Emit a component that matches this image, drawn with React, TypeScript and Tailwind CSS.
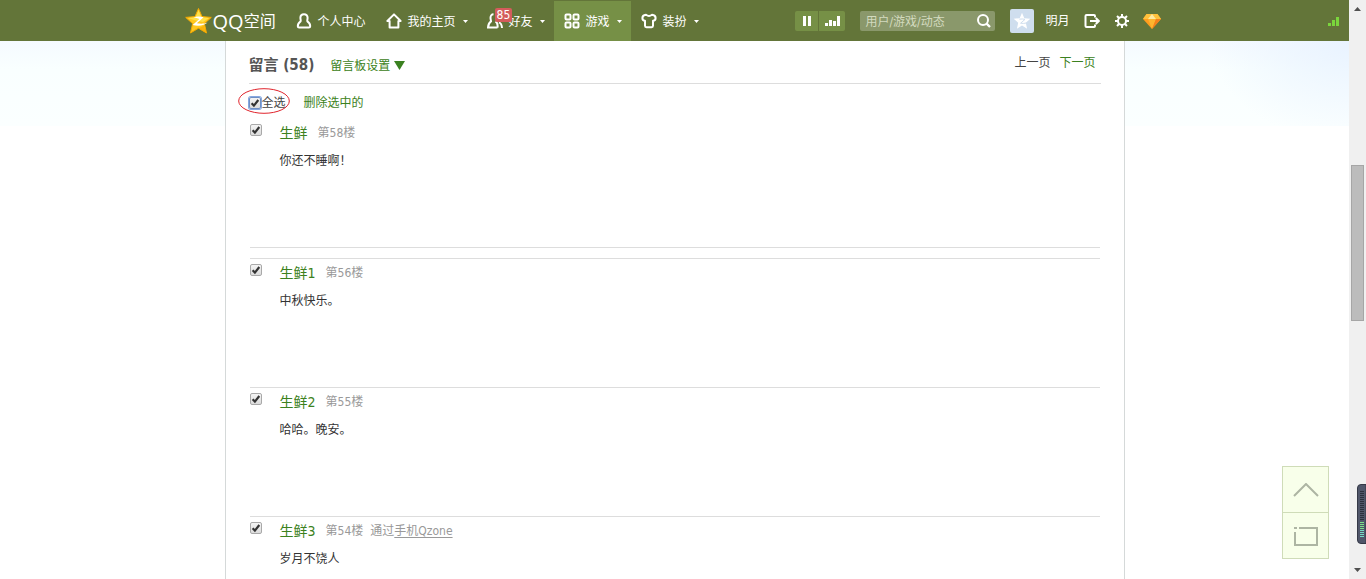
import type { ReactNode } from "react";

type Message = {
  name: string;
  floor: number;
  body: string;
  source?: string;
};

const firstMessage: Message = { name: "生鲜", floor: 58, body: "你还不睡啊！" };

const messages: Message[] = [
  { name: "生鲜1", floor: 56, body: "中秋快乐。" },
  { name: "生鲜2", floor: 55, body: "哈哈。晚安。" },
  { name: "生鲜3", floor: 54, body: "岁月不饶人", source: "手机Qzone" },
];

function Svg({ children, size = "size-4" }: { children: ReactNode; size?: string }) {
  return (
    <svg viewBox="0 0 16 16" className={`${size} shrink-0`} fill="none" stroke="currentColor" strokeWidth="2" aria-hidden="true">
      {children}
    </svg>
  );
}

const personPath = "M8 1.2C5.7 1.2 4.4 2.8 4.4 4.8C4.4 6.4 5 7.3 4.6 8.3C2.6 9.6 1.8 11 1.8 13.2Q1.8 14.6 3.2 14.6H12.8Q14.2 14.6 14.2 13.2C14.2 11 13.4 9.6 11.4 8.3C11 7.3 11.6 6.4 11.6 4.8C11.6 2.8 10.3 1.2 8 1.2Z";

function NavItem({
  icon,
  label,
  menu = true,
  active = false,
  badge,
}: {
  icon: ReactNode;
  label: string;
  menu?: boolean;
  active?: boolean;
  badge?: number;
}) {
  return (
    <a
      href="#"
      className={`relative flex h-10 items-center pl-[10px] text-xs text-white ${menu ? "pr-[9px]" : "pr-[10px]"} ${active ? "bg-[#769046]" : ""}`}
    >
      {icon}
      <span className="ml-[6px] pt-0.5">{label}</span>
      {menu && (
        <svg viewBox="0 0 5 3" className="ml-[7px] h-[3px] w-[5px]" aria-hidden="true">
          <path d="M0 0H5L2.5 3Z" fill="#fff" />
        </svg>
      )}
      {badge !== undefined && (
        <span className="absolute left-[18px] top-[7px] rounded-xs bg-[#d45c5c] px-[2px] text-xs leading-[14px]">
          {badge}
        </span>
      )}
    </a>
  );
}

function Tick({ label, focused = false }: { label: string; focused?: boolean }) {
  return (
    <span className="grid size-3 shrink-0">
      <input
        type="checkbox"
        defaultChecked
        aria-label={label}
        className={`peer col-start-1 row-start-1 size-3 appearance-none rounded-xs border bg-linear-to-b from-[#f4f4f4] to-[#dcdcdc] ${
          focused ? "border-[#6f8fc4] ring-1 ring-[#86a8e0]" : "border-[#a9a9a9]"
        }`}
      />
      <svg viewBox="0 0 12 12" className="pointer-events-none invisible col-start-1 row-start-1 size-3 peer-checked:visible" aria-hidden="true">
        <path d="M2.6 6.2L4.9 8.6L9.3 3" fill="none" stroke="#333" strokeWidth="2.2" />
      </svg>
    </span>
  );
}

function MessageItem({ message }: { message: Message }) {
  return (
    <article className="flex h-32 gap-[18px] pt-[5px]">
      <Tick label={`选择第${message.floor}楼`} />
      <div>
        <div className="flex h-[18px] items-center text-xs text-[#999]">
          <a href="#" className="text-sm text-[#3b8120]">{message.name}</a>
          <span className="ml-[10px]">第{message.floor}楼</span>
          {message.source && (
            <span className="ml-[7px]">
              通过
              <a href="#" className="underline underline-offset-2">{message.source}</a>
            </span>
          )}
        </div>
        <p className="mt-[9px] text-xs leading-5 text-[#333]">{message.body}</p>
      </div>
    </article>
  );
}

function Header() {
  return (
    <header className="grid h-[41px] shrink-0 grid-cols-[1fr_980px_1fr] bg-[#637539] pt-px">
      <div />
      <div className="flex items-center">
        <a href="#" className="flex w-[101px] items-center gap-px text-white">
          <svg viewBox="0 0 27 26" className="h-[26px] w-[27px]" aria-hidden="true">
            <path d="M13.5 .5L17 8.6L26.3 9.4L19.4 15.6L21.5 25L13.5 20.2L5.5 25L7.6 15.6L.7 9.4L10 8.6Z" fill="#ffc81e" stroke="#f5a800" />
            <path d="M13.5 2L16.4 9.2L24 10L18 14L9 12L3 10L10.6 9.2Z" fill="#ffe14a" />
            <path d="M8.5 9.2C12 8 16 8.2 18.6 9.3L11.8 15.3C15 16 19.5 16 22.5 14.6C20 17.6 13 18.7 7.6 17L14.5 11C12.5 10.2 10.5 9.8 8.5 9.2Z" fill="#fff" />
            <path d="M18.6 17.7L21.5 25L13.5 20.2L7 24Z" fill="#f7a600" opacity=".6" />
          </svg>
          <span className="flex items-center pt-0.5">
            <span className="font-['Open_Sans'] text-xl leading-5">QQ</span>
            <span className="text-base leading-5">空间</span>
          </span>
        </a>
        <nav className="flex">
          <NavItem label="个人中心" menu={false} icon={<Svg><path d={personPath} /></Svg>} />
          <NavItem label="我的主页" icon={<Svg><path d="M8 1.4L1.4 8H3.6V14.4H12.4V8H14.6Z" strokeLinejoin="round" /></Svg>} />
          <NavItem
            label="好友"
            badge={85}
            icon={
              <Svg>
                <path d="M10.5 14.6H1C1.2 11 2.2 9.5 4 8.4C4 7.4 3.5 6.4 3.5 4.8C3.5 2.8 4.6 1.2 6.5 1.2M8.6 8.4C10 9.5 11 11.5 10.5 14.6" />
                <path d="M12 9.4C14 10.2 14.8 12 15 15" />
              </Svg>
            }
          />
          <NavItem
            label="游戏"
            active
            icon={
              <Svg>
                <rect x="1.5" y="1.5" width="5" height="5" rx="1" />
                <rect x="9.5" y="1.5" width="5" height="5" rx="1" />
                <rect x="1.5" y="9.5" width="5" height="5" rx="1" />
                <rect x="9.5" y="9.5" width="5" height="5" rx="1" />
              </Svg>
            }
          />
          <NavItem
            label="装扮"
            icon={<Svg><path d="M5 1.8Q1.4 2.2 1.4 5Q1.4 7.8 4 7.8V12.8Q4 14.2 5.4 14.2H10.6Q12 14.2 12 12.8V7.8Q14.6 7.8 14.6 5Q14.6 2.2 11 1.8Q8 4 5 1.8Z" strokeLinejoin="round" /></Svg>}
          />
        </nav>
        <div className="ml-auto flex items-center pr-1 text-white">
          <div className="flex gap-px">
            <button type="button" aria-label="暂停" className="flex h-5 w-[23px] items-center justify-center rounded-l-xs bg-[#769046]">
              <svg viewBox="0 0 8 10" className="h-[10px] w-2" fill="#fff"><path d="M0 0H3V10H0ZM5 0H8V10H5Z" /></svg>
            </button>
            <button type="button" aria-label="音量" className="flex h-5 w-[26px] items-center justify-center rounded-r-xs bg-[#769046]">
              <svg viewBox="0 0 15 10" className="h-[10px] w-[15px]" fill="#fff"><path d="M0 7H3V10H0ZM4 4H7V10H4ZM8 5H11V10H8ZM12 0H15V10H12Z" /></svg>
            </button>
          </div>
          <form className="ml-[15px] flex h-5 w-[135px] items-center rounded-xs bg-[#8a986b] pl-[5px] pr-[3px]">
            <input
              type="text"
              aria-label="搜索"
              placeholder="用户/游戏/动态"
              className="min-w-0 flex-1 bg-transparent pt-0.5 text-xs outline-none placeholder:text-[#d3dabf]"
            />
            <button type="button" aria-label="搜索">
              <Svg><circle cx="7" cy="7" r="5" /><path d="M10.6 10.6L14 14" strokeWidth="2.4" /></Svg>
            </button>
          </form>
          <a href="#" aria-label="头像" className="ml-[15px] flex size-6 items-center justify-center rounded-xs bg-[#cfdeee]">
            <svg viewBox="0 0 18 18" className="size-[18px]">
              <path d="M9 .8L11.3 6.2L17.3 6.8L12.8 10.7L14.1 16.7L9 13.6L3.9 16.7L5.2 10.7L.7 6.8L6.7 6.2Z" fill="#fff" />
              <path d="M6.4 7.2C8.4 6.8 10.4 6.9 12 7.4L7.6 11.2C9.6 11.6 11.6 11.5 13.2 11" fill="none" stroke="#cfdeee" />
            </svg>
          </a>
          <a href="#" className="ml-[11px] text-xs">明月</a>
          <button type="button" aria-label="退出" className="ml-[14px]">
            <Svg><path d="M11 4.5V3Q11 2 10 2H2.5Q1.5 2 1.5 3V13Q1.5 14 2.5 14H10Q11 14 11 13V11.5M6 8H14.5M11.8 5L14.8 8L11.8 11" /></Svg>
          </button>
          <button type="button" aria-label="设置" className="ml-[14px]">
            <Svg>
              <circle cx="8" cy="8" r="4" />
              <path d="M8 1V4M8 12V15M1 8H4M12 8H15M3 3L5 5M11 11L13 13M3 13L5 11M11 5L13 3" />
            </Svg>
          </button>
          <a href="#" aria-label="黄钻" className="ml-[13px]">
            <svg viewBox="0 0 18 15" className="h-[15px] w-[18px]">
              <path d="M3.5 0H14.5L18 5L9 15L0 5Z" fill="#ff9d1e" />
              <path d="M3.5 0H14.5L18 5H0Z" fill="#ffc23c" />
              <path d="M5 5L9 0L13 5Z" fill="#ffe9a0" />
              <path d="M5 5H13L9 15Z" fill="#ffb52e" />
              <path d="M13 5H18L9 15Z" fill="#f5801c" />
            </svg>
          </a>
        </div>
      </div>
      <div className="flex items-center justify-end pr-[10px]">
        <svg viewBox="0 0 11 9" className="h-[9px] w-[11px]" fill="#7ad63c" aria-hidden="true">
          <path d="M0 6H3V9H0ZM4 3H7V9H4ZM8 0H11V9H8Z" />
        </svg>
      </div>
    </header>
  );
}

function Board() {
  return (
    <main className="mx-auto w-[900px] border-x border-[#d5d9d9] bg-white px-[23px]">
      <div className="flex h-[43px] items-center border-b border-[#ddd] pt-[7px] text-xs">
        <h1 className="text-[15px] font-bold text-[#555]">留言 (58)</h1>
        <button type="button" className="ml-4 flex items-center gap-1 text-[#3b8120]">
          留言板设置
          <svg viewBox="0 0 11 9" className="h-[9px] w-[11px]" aria-hidden="true"><path d="M0 0H11L5.5 9Z" fill="#3b8120" /></svg>
        </button>
        <div className="mb-[6px] ml-auto mr-[5px] flex gap-[9px]">
          <a href="#" className="text-[#444]">上一页</a>
          <a href="#" className="text-[#3b8120]">下一页</a>
        </div>
      </div>
      <div className="relative flex h-[35px] items-center pt-[3px] text-xs">
        <label className="flex items-center gap-px text-[#444]">
          <Tick label="全选" focused />
          <span>全选</span>
        </label>
        <button type="button" className="ml-[18px] text-[#3b8120]">删除选中的</button>
        <svg viewBox="0 0 52 26" className="pointer-events-none absolute -left-[11px] top-1 h-[26px] w-[52px]" aria-hidden="true">
          <ellipse cx="26" cy="13" rx="25.3" ry="12.3" fill="none" stroke="#e0242c" />
        </svg>
      </div>
      <section className="px-px">
        <div className="mb-[10px] border-b border-[#ddd]">
          <MessageItem message={firstMessage} />
        </div>
        {messages.map((message) => (
          <div key={message.floor} className="border-t border-[#ddd]">
            <MessageItem message={message} />
          </div>
        ))}
      </section>
    </main>
  );
}

function Scrollbar() {
  return (
    <div className="flex w-[17px] shrink-0 flex-col items-center bg-[#f0f0f0]" aria-hidden="true">
      <svg viewBox="0 0 17 17" className="size-[17px]"><path d="M5 11H12L8.5 7Z" fill="#505050" /></svg>
      <div className="flex-[149]" />
      <div className="w-[13px] flex-[154] border border-[#a6a6a6] bg-[#bcbcbc]" />
      <div className="flex-[242]" />
      <svg viewBox="0 0 17 17" className="size-[17px]"><path d="M5 6H12L8.5 10Z" fill="#505050" /></svg>
    </div>
  );
}

export default function App() {
  return (
    <div className="relative flex h-screen overflow-hidden bg-white font-['DejaVu_Sans_Condensed','DejaVu_Sans','Noto_Sans_CJK_SC',sans-serif]">
      <div className="flex min-w-0 flex-1 flex-col">
        <Header />
        <div className="flex flex-1 bg-[radial-gradient(140px_100px_at_100%_0,#e9f3ff,#e9f3ff00),linear-gradient(#f5faff,#f9ffff_28px,#fbffff_85px)] bg-[length:100%_85px] bg-no-repeat">
          <Board />
        </div>
      </div>
      <Scrollbar />
      <div className="absolute bottom-5 right-[37px] flex w-[47px] flex-col border border-[#cfdcb8] bg-[#f8ffea]">
        <button type="button" aria-label="返回顶部" className="flex h-[46px] items-center justify-center border-b border-[#cfdcb8]">
          <svg viewBox="0 0 26 14" className="h-[14px] w-[26px]" fill="none" stroke="#adb5a3" strokeWidth="2"><path d="M1 13L13 1L25 13" /></svg>
        </button>
        <button type="button" aria-label="展开" className="flex h-[45px] items-center justify-center">
          <svg viewBox="0 0 24 20" className="h-5 w-6" fill="none" stroke="#adb5a3" strokeWidth="2"><path d="M5 2H23V19H1V6M0 2H3" /></svg>
        </button>
      </div>
      <svg viewBox="0 0 9 60" className="absolute bottom-[35px] right-0 h-[60px] w-[9px]" aria-hidden="true">
        <path d="M9 .5H4Q.5 .5 .5 4V56Q.5 59.5 4 59.5H9Z" fill="#50566a" stroke="#343846" />
        <path d="M5 7V37" stroke="#2c303d" strokeWidth="4" strokeDasharray="1 1" />
        <path d="M5 38V46" stroke="#7de08a" strokeWidth="4" strokeDasharray="1 1" />
        <path d="M5 46V54" stroke="#74d9c4" strokeWidth="4" strokeDasharray="1 1" />
      </svg>
    </div>
  );
}
